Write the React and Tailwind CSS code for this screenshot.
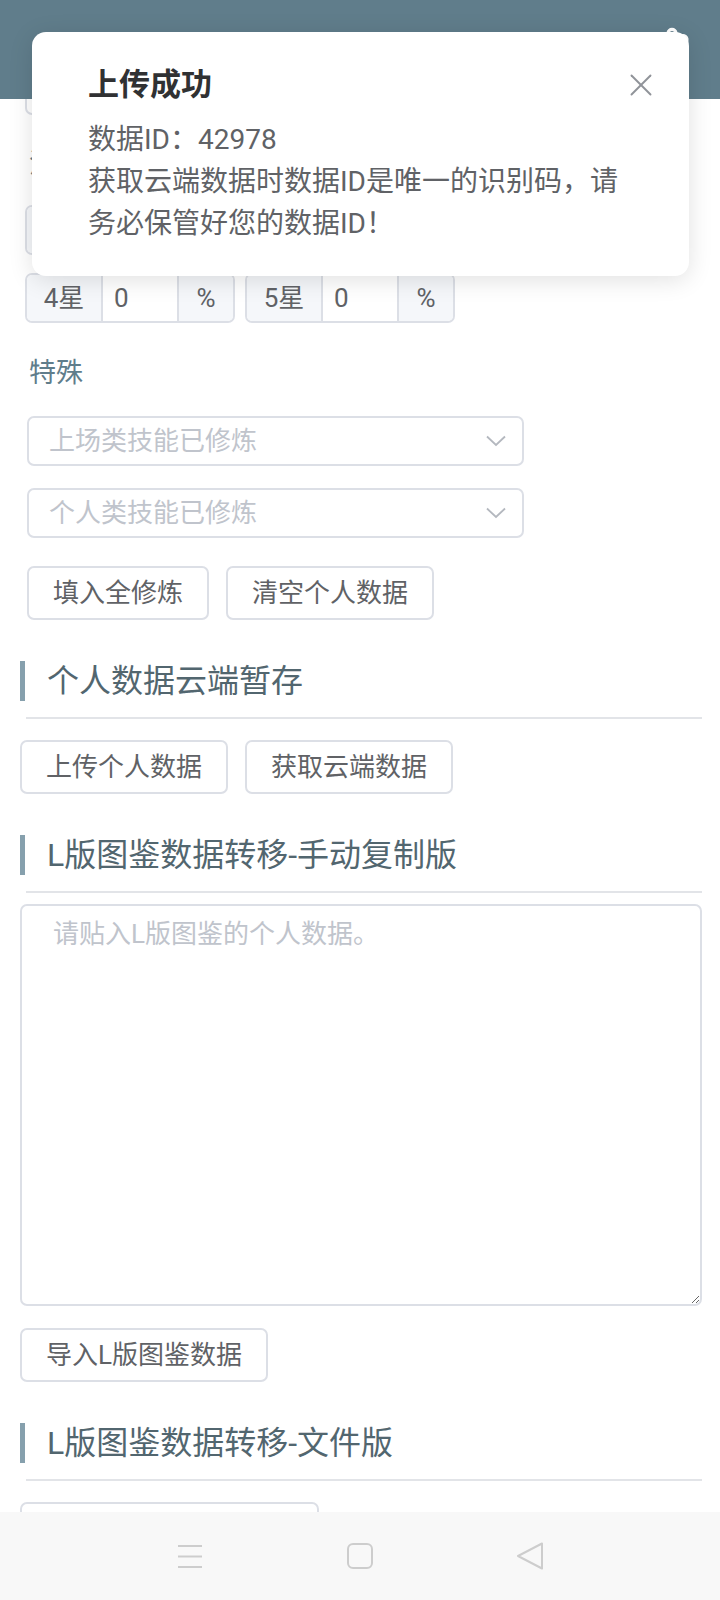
import { ChevronLeft, Settings, X } from "lucide-react";

const font = { fontFamily: 'Roboto, "Noto Sans CJK SC", sans-serif' };

function StarInput({ label = "", value = "" , unit = "" }) {
  return (
    <div className="flex h-[50px] w-[210px] overflow-hidden rounded-[7px] border-2 border-[#dcdfe6] text-[26px] leading-none text-[#606266]">
      <div className="flex w-[76px] items-center justify-center border-r-2 border-[#dcdfe6] bg-[#f5f7fa]">
        {label}
      </div>
      <div className="flex w-[74px] items-center pl-[11px] bg-white">{value}</div>
      <div className="flex flex-1 items-center justify-center border-l-2 border-[#dcdfe6] bg-[#f5f7fa]">
        {unit}
      </div>
    </div>
  );
}

function SelectBox({ placeholder }) {
  return (
    <div className="flex h-[50px] w-[497px] items-center justify-between rounded-[7px] border-2 border-[#dcdfe6] bg-white pl-[20px] pr-[16px]">
      <span className="text-[26px] leading-none text-[#c0c4cc]">{placeholder}</span>
      <svg width="20" height="12" viewBox="0 0 20 12" fill="none">
        <path d="M1 1.5 L10 10 L19 1.5" stroke="#b4b8bf" strokeWidth="1.8" />
      </svg>
    </div>
  );
}

function Btn({ children, className = "" }) {
  return (
    <button
      className={
        "flex h-[54px] items-center rounded-[7px] border-2 border-[#dcdfe6] bg-white px-[24px] text-[26px] leading-none text-[#606266] " +
        className
      }
    >
      {children}
    </button>
  );
}

function Heading({ children, className = "" }) {
  return (
    <div className={className}>
      <div className="flex h-[40px] items-center">
        <div className="h-[40px] w-[5px] bg-[#86a0ad]" />
        <div className="ml-[22px] text-[32px] leading-none text-[#52666f]">{children}</div>
      </div>
      <div className="ml-[6px] mt-[16px] h-[2px] bg-[#e2e4e8]" />
    </div>
  );
}

export default function App() {
  return (
    <div className="relative flex h-[1600px] w-[720px] flex-col overflow-hidden bg-white" style={font}>
      <div className="flex h-[99px] shrink-0 items-start justify-between bg-[#607d8b] px-[28px] pt-[26px] text-white">
        <ChevronLeft size={44} strokeWidth={2.2} />
        <Settings size={40} strokeWidth={2} />
      </div>

      <div className="flex-1 overflow-hidden pl-[20px] pr-[18px]">
        <div className="mt-[-34px] flex gap-[10px] pl-[5px]">
          <div className="flex h-[50px] w-[420px] rounded-[7px] border-2 border-[#dcdfe6]" />
        </div>

        <div className="mt-[29px] pl-[9px] text-[27px] leading-[40px] text-[#607d8b]">潜能</div>

        <div className="mt-[21px] flex w-[660px] flex-wrap gap-x-[10px] gap-y-[18px] pl-[5px]">
          <StarInput />
          <StarInput />
          <StarInput />
          <StarInput label="4星" value="0" unit="%" />
          <StarInput label="5星" value="0" unit="%" />
        </div>

        <div className="mt-[30px] pl-[9px] text-[27px] leading-[40px] text-[#607d8b]">特殊</div>

        <div className="mt-[23px] flex flex-col gap-[22px] pl-[7px]">
          <SelectBox placeholder="上场类技能已修炼" />
          <SelectBox placeholder="个人类技能已修炼" />
        </div>

        <div className="mt-[28px] flex gap-[17px] pl-[7px]">
          <Btn>填入全修炼</Btn>
          <Btn>清空个人数据</Btn>
        </div>

        <Heading className="mt-[41px]">个人数据云端暂存</Heading>

        <div className="mt-[21px] flex gap-[17px]">
          <Btn>上传个人数据</Btn>
          <Btn>获取云端数据</Btn>
        </div>

        <Heading className="mt-[41px]">L版图鉴数据转移-手动复制版</Heading>

        <textarea
          className="mt-[11px] block h-[402px] w-full rounded-[7px] border-2 border-[#dcdfe6] px-[31px] py-[8px] text-[26px] leading-[40px] text-[#606266] outline-none placeholder:text-[#c0c4cc]"
          placeholder="请贴入L版图鉴的个人数据。"
        />

        <div className="mt-[22px] flex">
          <Btn>导入L版图鉴数据</Btn>
        </div>

        <Heading className="mt-[41px]">L版图鉴数据转移-文件版</Heading>

        <div className="mt-[21px] flex">
          <Btn className="w-[299px]" />
        </div>
      </div>

      <div className="flex h-[88px] shrink-0 items-center justify-center bg-[#f8f8f8]">
        <div className="flex w-[170px] justify-center">
          <svg width="26" height="25" viewBox="0 0 26 25" fill="none" stroke="#cdcdcd" strokeWidth="2">
            <path d="M1 2h24M1 12.5h24M1 23h24" />
          </svg>
        </div>
        <div className="flex w-[170px] justify-center">
          <svg width="26" height="26" viewBox="0 0 26 26" fill="none" stroke="#cdcdcd" strokeWidth="2">
            <rect x="1" y="1" width="24" height="24" rx="5" />
          </svg>
        </div>
        <div className="flex w-[170px] justify-center">
          <svg width="28" height="28" viewBox="0 0 28 28" fill="none" stroke="#cdcdcd" strokeWidth="2" strokeLinejoin="round">
            <path d="M26 1.5 L2 14 L26 26.5 Z" />
          </svg>
        </div>
      </div>

      <div className="absolute left-[32px] top-[32px] h-[244px] w-[657px] rounded-[14px] bg-white pl-[56px] pt-[33px] shadow-[0_4px_24px_rgba(0,0,0,0.12)]">
        <div className="flex items-center justify-between pr-[29px]">
          <div className="text-[31px] font-bold leading-[40px] text-[#303133]">上传成功</div>
          <X size={38} strokeWidth={1.2} className="text-[#909399]" />
        </div>
        <div className="mt-[14px] w-[548px] text-[28px] leading-[42px] text-[#606266]">
          <p>数据ID：42978</p>
          <p>获取云端数据时数据ID是唯一的识别码，请务必保管好您的数据ID！</p>
        </div>
      </div>
    </div>
  );
}
